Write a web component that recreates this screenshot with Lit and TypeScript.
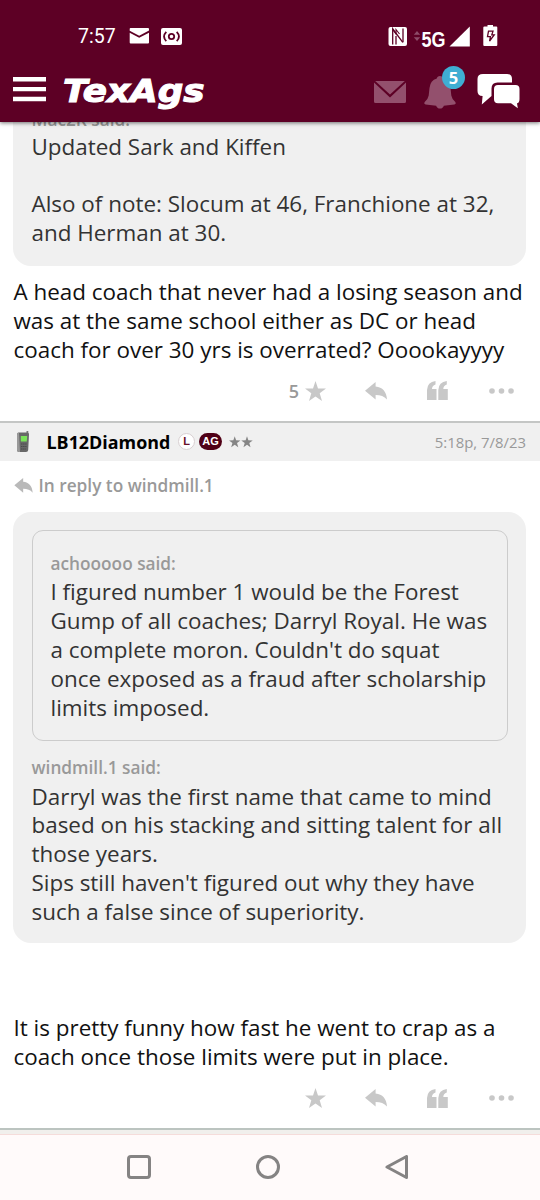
import { LitElement, html, css, svg, nothing } from "lit";
import { customElement, property } from "lit/decorators.js";

const reply = svg`<path d="M0 8.8 10.6 0v4.4C17.5 5 21.6 9.6 22 17.6 19.2 14.2 15.6 12.9 10.6 12.9V17.6z"/>`;
const star = svg`<path d="M10.5 0 13 7.4 21 7.6 14.7 12.3 17 20 10.5 15.4 4 20 6.3 12.3 0 7.6 8 7.4z"/>`;

@customElement("status-bar")
export class StatusBar extends LitElement {
  static styles = css`
    :host { display: flex; align-items: center; height: 64px; padding: 8px 41px 0 78px; box-sizing: border-box; color: #fff; font-family: Roboto, sans-serif; }
    .time { font-size: 19.5px; line-height: 24px; width: 51px; letter-spacing: 0; padding-top: 2px; }
    .grow { flex: 1; }
    svg { display: block; flex: none; }
    .mail { margin: 0 11px 0 0; }
    .fiveg { font: 700 22.3px "Liberation Sans", sans-serif; fill: #fff; }
  `;
  render() {
    return html`
      <div class="time">7:57</div>
      <svg class="mail" width="21" height="16" viewBox="0 0 21 16"><path fill="#fff" d="M1.5 0h17.500q1 0 1 1v1.500L10.200 7.800.700 2.800V1q0-1 .8-1zM.700 4.700l9.500 5 9.800-5V14.500q0 1-1 1H1.700q-1 0-1-1z"/></svg>
      <svg width="21" height="17" viewBox="0 0 21 17"><rect width="21" height="17" rx="2" fill="#fff"/><g fill="none" stroke="#5d0025" stroke-width="1.800"><circle cx="10.500" cy="8.500" r="2.700"/><path d="M5.300 3.800Q.800 8.500 5.300 13.200M15.700 3.800q4.500 4.700 0 9.400"/></g></svg>
      <div class="grow"></div>
      <svg width="111" height="32" viewBox="388 20 111 32">
        <rect x="388.500" y="27" width="18.500" height="19" rx="2" fill="#fff"/>
        <path d="M392.700 44.500V28.800L402.800 42.300" fill="none" stroke="#5d0025" stroke-width="1.300"/>
        <path d="M396 44.500V36M403 42.300V28.500" fill="none" stroke="#5d0025" stroke-width="1.300"/>
        <path d="M392.700 29.500 396 34v-4.500l3.500 4.500" fill="none" stroke="#5d0025" stroke-width="1.100"/>
        <path d="M413.800 34.700 417 31l3.200 3.700zM413.800 37.300 417 41l3.200-3.700z" fill="#8d4b69"/>
        <text class="fiveg" x="421.500" y="46.700" textLength="24" lengthAdjust="spacingAndGlyphs">5G</text>
        <path d="M469.800 26.500V46.500H449.500z" fill="#fff"/>
        <path d="M484.500 26.500h3v-1.500h5.500v1.500h3.300q1 0 1 1v17.500q0 1-1 1h-12q-1 0-1-1V27.500q0-1 1.200-1z" fill="#fff"/>
        <path d="M488.500 31.200h4.500l-1.200 3.700h2.400L489.600 41l.8-4.300h-2.900z" fill="none" stroke="#5d0025" stroke-width="1.300"/>
      </svg>`;
  }
}

@customElement("site-bar")
export class SiteBar extends LitElement {
  static styles = css`
    :host { display: flex; align-items: flex-start; height: 58px; padding: 0 20px 0 13px; box-sizing: border-box; }
    svg { display: block; flex: none; }
    .menu { margin: 13px 0 0 0; }
    .logo { margin: 8px 0 0 16px; }
    .word { font: italic 700 31.800px "DejaVu Sans", sans-serif; fill: #fff; stroke: #fff; stroke-width: 1.100px; }
    .grow { flex: 1; }
    .mail { margin: 17px 18px 0 0; }
    .alerts { position: relative; margin-right: 21px; padding-top: 12px; }
    .count { position: absolute; left: 18px; top: 2px; width: 23px; height: 23px; border-radius: 50%; background: #3faed3; color: #fff; font: 700 16.500px/23px "Open Sans", sans-serif; text-align: center; }
    .chat { margin-top: 9px; }
  `;
  render() {
    return html`
      <svg class="menu" width="33" height="25" viewBox="0 0 33 25"><path d="M0 2.200h33M0 12.100h33M0 22h33" stroke="#fff" stroke-width="4.400"/></svg>
      <svg class="logo" width="146" height="40" viewBox="62 72 146 40"><text class="word" x="63" y="101.500" textLength="141.500" lengthAdjust="spacingAndGlyphs">TexAgs</text></svg>
      <div class="grow"></div>
      <svg class="mail" width="32" height="22" viewBox="0 0 32 22"><g fill="#93506d"><path d="M1.200 0h29.600L16 13.500z"/><path d="M0 1.500 16 16.500 32 1.500V20.500q0 1.500-1.500 1.500h-29Q0 22 0 20.500z"/></g></svg>
      <div class="alerts">
        <svg width="32" height="33" viewBox="0 0 32 33"><path fill="#93506d" d="M16 0q2.800 0 3.200 2.600 6.500 1.800 7.300 9.400l.8 7.500q.5 3.300 4 6.500 1.200 2-1 2.600l-10.500 1.200Q19 32.600 16 32.600T12.200 29.800L1.700 28.600q-2.200-.6-1-2.600 3.500-3.200 4-6.500l.8-7.500Q6.300 4.400 12.800 2.600 13.200 0 16 0z"/></svg>
        <div class="count">5</div>
      </div>
      <svg class="chat" width="43" height="36" viewBox="0 0 43 36"><path fill="#fff" d="M6 1h24q5 0 5 5v3.500H20.500q-6 0-6 6v7.500L4.800 31.500 5.600 23Q.5 23 .5 18V6q0-5 5.500-5z"/><path fill="#fff" d="M21 12h17.500q4 0 4 4V26q0 4-2.500 4.300l.8 5-6.800-5H21q-4 0-4-4V16q0-4 4-4z"/></svg>`;
  }
}

@customElement("post-actions")
export class PostActions extends LitElement {
  @property() count = "";
  static styles = css`
    :host { display: flex; align-items: center; height: 24px; padding: 0 26px 0 0; justify-content: flex-end; fill: #c8c8c8; }
    .count { font: 600 18px/24px "Open Sans", sans-serif; color: #999; margin-right: 6px; }
    svg { display: block; flex: none; }
    .star { margin-right: 39px; }
    .back { margin-right: 40px; }
    .quote { margin-right: 41px; }
  `;
  render() {
    return html`
      ${this.count ? html`<span class="count">${this.count}</span>` : nothing}
      <svg class="star" width="21" height="20" viewBox="0 0 21 20">${star}</svg>
      <svg class="back" width="22" height="18" viewBox="0 0 22 18">${reply}</svg>
      <svg class="quote" width="21" height="19" viewBox="0 0 21 19"><path d="M0 19V9Q.3 1 8.500 0v3.400Q5 4.500 5 8h4.500v11zM11.300 19V9q.3-8 8.500-9v3.400Q16.300 4.500 16.300 8h4.500v11z"/></svg>
      <svg width="25" height="6" viewBox="0 0 25 6"><circle cx="3" cy="3" r="2.800"/><circle cx="12.500" cy="3" r="2.800"/><circle cx="22" cy="3" r="2.800"/></svg>`;
  }
}

@customElement("app-root")
export class AppRoot extends LitElement {
  static styles = css`
    :host { display: flex; flex-direction: column; height: 1200px; width: 540px; overflow: hidden; background: #fff; font-family: "Open Sans", sans-serif; }
    svg { display: block; flex: none; }
    .top { flex: none; height: 122px; background: #5d0025; box-shadow: 0 1px 4px rgba(0,0,0,.55); z-index: 1; }
    .text { font-size: 22.430px; line-height: 28.800px; color: #111; white-space: nowrap; }
    .said { font-weight: 600; font-size: 17.250px; line-height: 24px; color: #999; white-space: nowrap; }
    .quote { margin: 0 14px 0 13px; padding: 18px 18px 18px 18.500px; background: #f0f0f0; border-radius: 18px; }
    .quote .said { margin-bottom: 2px; }
    .quote .text { color: #333; }
    .first { flex: none; height: 143.500px; box-sizing: border-box; padding-top: 0; border-radius: 0 0 18px 18px; display: flex; flex-direction: column; justify-content: flex-end; padding-bottom: 17.500px; }
    .first .said { margin-bottom: 1px; }
    .body { padding: 0 13.500px; }
    .b1 { margin-top: 12.500px; }
    .a1 { margin-top: 14.500px; }
    .head { display: flex; align-items: center; flex: none; height: 40px; box-sizing: border-box; margin-top: 18px; border-top: 2px solid #c4c6c5; background: #f0f0f0; padding: 0 14px 0 16px; }
    .name { font-weight: 700; font-size: 17.900px; line-height: 24px; color: #000; margin-left: 16.500px; white-space: nowrap; width: 131.500px; }
    .l, .ag { font: 700 11px/16px "Liberation Sans", sans-serif; text-align: center; box-sizing: border-box; height: 17px; }
    .l { width: 17px; border-radius: 50%; background: #fff; border: 1px solid #d8d0d2; color: #6a1029; line-height: 15px; }
    .ag { width: 23px; border-radius: 9px; background: #500016; color: #fff; margin-left: 4px; line-height: 17px; }
    .rank { margin-left: 7px; }
    .date { flex: 1; text-align: right; font-size: 14.900px; color: #999; }
    .to { display: flex; align-items: center; gap: 6px; height: 24px; margin: 13px 14px 0 13.500px; fill: #b9b9b9; }
    .q2 { margin-top: 14px; height: 431px; box-sizing: border-box; flex: none; }
    .inner { border: 1px solid #ccc; border-radius: 11px; padding: 21.500px 18px 0; height: 211px; box-sizing: border-box; }
    .s2 { margin-top: 15px; }
    .quote .s2 { margin-bottom: 2.800px; }
    .b2 { margin-top: 71.300px; }
    .a2 { margin-top: 14.700px; }
    .line { height: 2px; background: #bcc4c0; margin-top: 18px; flex: none; }
    .band { height: 4px; background: #f1efec; border-bottom: 1px solid #f5dcda; flex: none; }
    .nav { flex: 1; background: #fffafa; display: flex; justify-content: center; gap: 105px; padding: 20px 4px 0 0; fill: none; stroke: #858383; stroke-width: 3; stroke-linejoin: round; }
  `;
  render() {
    return html`
      <div class="top"><status-bar></status-bar><site-bar></site-bar></div>
      <div class="quote first">
        <div class="said">Mac2K said:</div>
        <div class="text">Updated Sark and Kiffen<br><br>Also of note: Slocum at 46, Franchione at 32,<br>and Herman at 30.</div>
      </div>
      <div class="body text b1">A head coach that never had a losing season and<br>was at the same school either as DC or head<br>coach for over 30 yrs is overrated? Ooookayyyy</div>
      <post-actions class="a1" count="5"></post-actions>
      <div class="head">
        <svg width="14" height="22" viewBox="0 0 14 22">
          <path d="M10.500 0h1.800v4h-1.800z" fill="#777"/>
          <path d="M3 1.500h8q2.200 0 2 2L12.200 19q-.2 2-2.200 2H3q-2 0-2-2V3.500q0-2 2-2z" fill="#686868"/>
          <path d="M1 3.500q0-2 2-2L4 21H3q-2 0-2-2z" fill="#999"/>
          <path d="M4.800 5h6.400l-.4 5.500H4.800z" fill="#7be35a"/>
          <path d="M5 13h5.500M5 15.500h5.500M5 18h5" stroke="#4a4a4a" stroke-width="1.100" stroke-dasharray="1.500 .6"/>
        </svg>
        <span class="name">LB12Diamond</span>
        <span class="l">L</span><span class="ag">AG</span>
        <svg class="rank" width="24" height="12" viewBox="0 0 44 21" fill="#858585">${star}<g transform="translate(22.500)">${star}</g></svg>
        <span class="date">5:18p, 7/8/23</span>
      </div>
      <div class="to"><svg width="19" height="15" viewBox="0 0 22 18">${reply}</svg><span class="said">In reply to windmill.1</span></div>
      <div class="quote q2">
        <div class="inner">
          <div class="said">achooooo said:</div>
          <div class="text">I figured number 1 would be the Forest<br>Gump of all coaches; Darryl Royal. He was<br>a complete moron. Couldn't do squat<br>once exposed as a fraud after scholarship<br>limits imposed.</div>
        </div>
        <div class="said s2">windmill.1 said:</div>
        <div class="text">Darryl was the first name that came to mind<br>based on his stacking and sitting talent for all<br>those years.<br>Sips still haven't figured out why they have<br>such a false since of superiority.</div>
      </div>
      <div class="body text b2">It is pretty funny how fast he went to crap as a<br>coach once those limits were put in place.</div>
      <post-actions class="a2"></post-actions>
      <div class="line"></div><div class="band"></div>
      <div class="nav">
        <svg width="24" height="24" viewBox="0 0 24 24"><rect x="1.500" y="1.500" width="21" height="21" rx="2.500"/></svg>
        <svg width="24" height="24" viewBox="0 0 24 24"><circle cx="12" cy="12" r="10.500"/></svg>
        <svg width="24" height="24" viewBox="0 0 24 24"><path d="M21.500 1.500v21L2 12z"/></svg>
      </div>`;
  }
}
